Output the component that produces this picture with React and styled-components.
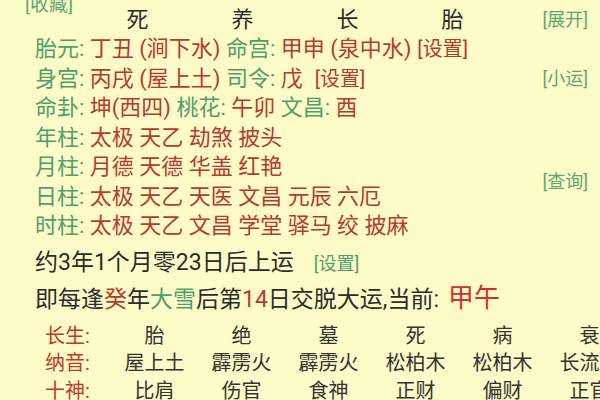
import React from 'react';
import styled, { createGlobalStyle } from 'styled-components';

const GlobalStyle = createGlobalStyle`
  html, body {
    margin: 0;
    padding: 0;
    background: #fdfbc8;
    overflow: hidden;
  }
  body {
    font-family: Roboto, "Noto Sans CJK SC", sans-serif;
    color: #2b2b2b;
  }
`;

const GREEN = '#4f9f68';
const RED = '#b8392e';

const Page = styled.div`
  width: 600px;
  height: 440px;
  overflow: hidden;
  margin-top: -22px;
  white-space: nowrap;
`;

const Header = styled.div`
  display: grid;
  grid-template-columns: 85px repeat(4, 105px) 1fr;
  grid-template-rows: 28px 28px;
  font-size: 22px;
  line-height: 28px;
`;

const HeadCell = styled.div`
  text-align: center;
  grid-column: ${p => p.$span || 'auto'};
`;

const HiddenCell = styled(HeadCell)`
  line-height: 22px;
  align-self: start;
`;

const Btn = styled.span`
  font-size: 18px;
  color: ${p => p.$color || GREEN};
  opacity: 0.9;
`;

const SideBtn = styled(Btn)`
  justify-self: end;
  align-self: center;
  padding-right: 12px;
  grid-column: ${p => p.$col || 'auto'};
  grid-row: ${p => p.$row || 'auto'};
`;

const Collect = styled(Btn)`
  grid-column: 1;
  grid-row: 1 / 3;
  align-self: center;
  padding-left: 25px;
  font-size: 19px;
  margin-top: -2px;
`;

const Info = styled.div`
  display: grid;
  grid-template-columns: 1fr auto;
  grid-auto-rows: 29.5px;
  font-size: 22px;
  line-height: 29.5px;
  padding-left: 35px;
`;

const Line = styled.div`
  grid-column: 1;
`;

const Label = styled.span`
  color: ${GREEN};
`;

const Val = styled.span`
  color: ${RED};
`;

const Set = styled.span`
  color: ${RED};
  font-size: 20px;
  margin-left: ${p => p.$gap || 6}px;
`;

const RunSet = styled(Set)`
  color: ${GREEN};
  font-size: 18px;
  margin-left: 20px;
`;

const Text = styled.div`
  font-size: 23px;
  line-height: 34px;
  padding-left: 35px;
  margin-top: ${p => p.$top || 0}px;
`;

const Big = styled.span`
  color: #d4302a;
  font-size: 26px;
  margin-left: 9px;
`;

const Mark = styled.span`
  color: ${p => p.$color};
`;

const Table = styled.div`
  display: grid;
  grid-template-columns: 66px repeat(6, 87px);
  grid-auto-rows: 27.5px;
  font-size: 20px;
  line-height: 27.5px;
  padding-left: 45px;
  margin-top: 6px;
`;

const RowLabel = styled.div`
  color: #c0392b;
`;

const Cell = styled.div`
  text-align: center;
  color: #333;
`;

const pillars = ['死', '养', '长', '胎'];

const table = [
  { label: '长生', cells: ['胎', '绝', '墓', '死', '病', '衰'] },
  { label: '纳音', cells: ['屋上土', '霹雳火', '霹雳火', '松柏木', '松柏木', '长流水'] },
  { label: '十神', cells: ['比肩', '伤官', '食神', '正财', '偏财', '正官'] },
];

const shensha = [
  ['年柱', '太极 天乙 劫煞 披头'],
  ['月柱', '月德 天德 华盖 红艳'],
  ['日柱', '太极 天乙 天医 文昌 元辰 六厄'],
  ['时柱', '太极 天乙 文昌 学堂 驿马 绞 披麻'],
];

export default function App() {
  return (
    <Page>
      <GlobalStyle />
      <Header>
        <Collect>[收藏]</Collect>
        <HiddenCell $span="2 / 4">&nbsp;&nbsp;伤官星&nbsp;&nbsp;&nbsp;&nbsp;&nbsp;&nbsp;正印格</HiddenCell>
        <HeadCell $span="4 / 7"></HeadCell>
        {pillars.map(p => <HeadCell key={p}>{p}</HeadCell>)}
        <SideBtn>[展开]</SideBtn>
      </Header>

      <Info>
        <Line>
          <Label>胎元: </Label><Val>丁丑 (涧下水) </Val>
          <Label>命宫: </Label><Val>甲申 (泉中水)</Val>
          <Set>[设置]</Set>
        </Line>
        <Line>
          <Label>身宫: </Label><Val>丙戌 (屋上土) </Val>
          <Label>司令: </Label><Val>戊</Val>
          <Set $gap={12}>[设置]</Set>
        </Line>
        <SideBtn $col={2} $row={2}>[小运]</SideBtn>
        <Line>
          <Label>命卦: </Label><Val>坤(西四) </Val>
          <Label>桃花: </Label><Val>午卯 </Val>
          <Label>文昌: </Label><Val>酉</Val>
        </Line>
        {shensha.map(([k, v]) => (
          <Line key={k}>
            <Label>{k}: </Label><Val>{v}</Val>
          </Line>
        ))}
        <SideBtn $col={2} $row="5 / 7">[查询]</SideBtn>
      </Info>

      <Text $top={5}>
        约3年1个月零23日后上运<RunSet>[设置]</RunSet>
      </Text>
      <Text>
        即每逢<Mark $color={RED}>癸</Mark>年<Mark $color={GREEN}>大雪</Mark>后第<Mark $color={RED}>14</Mark>日交脱大运,当前:<Big>甲午</Big>
      </Text>

      <Table>
        {table.map(row => (
          <React.Fragment key={row.label}>
            <RowLabel>{row.label}:</RowLabel>
            {row.cells.map((c, i) => <Cell key={i}>{c}</Cell>)}
          </React.Fragment>
        ))}
      </Table>
    </Page>
  );
}
